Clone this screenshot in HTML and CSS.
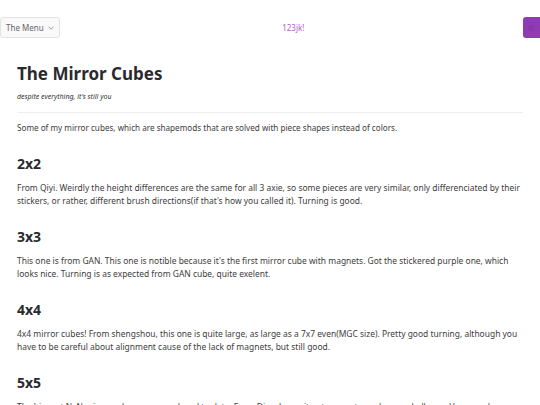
FILE: index.html
```html
<html>
<head>
<link rel="stylesheet" href="styles.css">
</head>
<body>
<div class="topbar">
  <button class="menu-btn">The Menu <svg width="6" height="4" viewBox="0 0 6 4"><path d="M0.5 0.8 L3 3.2 L5.5 0.8" fill="none" stroke="#888" stroke-width="0.8"/></svg></button>
  <span class="brand">123jk!</span>
  <div class="user-btn"><svg width="8" height="8" viewBox="0 0 8 8"><path d="M1 2h6M1 4h6M1 6h6" stroke="#7a2f9c" stroke-width="1"/></svg></div>
</div>

<div class="container">
  <h1>The Mirror Cubes</h1>
  <p class="subtitle">despite everything, it's still you</p>
  <hr>
  <p class="intro">Some of my mirror cubes, which are shapemods that are solved with piece shapes instead of colors.</p>

  <div class="cube">
    <h2>2x2</h2>
    <p>From Qiyi. Weirdly the height differences are the same for all 3 axie, so some pieces are very similar, only differenciated by their stickers, or rather, different brush directions(if that's how you called it). Turning is good.</p>
  </div>

  <div class="cube">
    <h2>3x3</h2>
    <p>This one is from GAN. This one is notible because it's the first mirror cube with magnets. Got the stickered purple one, which looks nice. Turning is as expected from GAN cube, quite exelent.</p>
  </div>

  <div class="cube">
    <h2>4x4</h2>
    <p>4x4 mirror cubes! From shengshou, this one is quite large, as large as a 7x7 even(MGC size). Pretty good turning, although you have to be careful about alignment cause of the lack of magnets, but still good.</p>
  </div>

  <div class="cube">
    <h2>5x5</h2>
    <p>The biggest NxN mirror cubes mass produced to date. From Diansheng, it got magnets, and even a ball core. Very good turning, smooth and stable.</p>
  </div>
</div>
</body>
</html>
```

FILE: styles.css
```css
body {
  margin: 0;
  font-family: "Noto Sans", "Open Sans", sans-serif;
  font-size: 8.15px;
  line-height: 13px;
  color: #3d3d3d;
  background-color: #fff;
}

.topbar {
  display: flex;
  align-items: center;
  justify-content: space-between;
  padding-top: 17px;
}

.menu-btn {
  display: flex;
  align-items: center;
  gap: 4px;
  height: 21px;
  padding: 0 5px;
  font-family: inherit;
  font-size: 8px;
  color: #666;
  background-color: #f9f9fa;
  border: 1px solid #e3e3e6;
  border-radius: 3px;
}

.brand {
  color: #b05fd0;
  font-size: 8px;
  margin-left: 4px;
}

.user-btn {
  display: flex;
  align-items: center;
  justify-content: center;
  width: 17px;
  height: 21px;
  background-color: #8f3bb5;
  border-radius: 3px 0 0 3px;
}

.user-btn svg {
  opacity: 0.5;
}

.container {
  padding: 0 17px;
}

h1 {
  margin: 25px 0 0;
  font-size: 17px;
  line-height: 22px;
  font-weight: 700;
  color: #2a2a2e;
}

.subtitle {
  margin: 7px 0 0;
  font-size: 7px;
  font-style: italic;
  line-height: 10px;
  color: #333;
}

hr {
  margin: 10px 0 7.5px;
  height: 0;
  border: 0;
  border-top: 1px solid #eeeeee;
}

p {
  margin: 0;
}

.cube p {
  font-size: 8.45px;
}

h2 {
  margin: 21.5px 0 7.5px;
  font-size: 14px;
  line-height: 18px;
  font-weight: 700;
  color: #2a2a2e;
}
```
